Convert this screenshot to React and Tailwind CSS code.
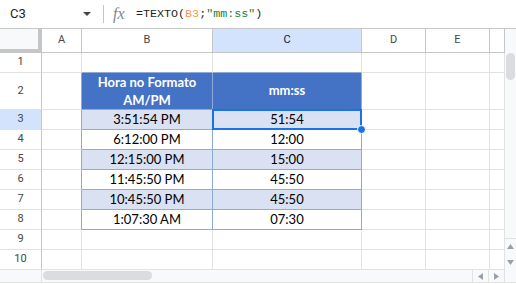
import React from 'react';

const data = [
  ['3:51:54 PM', '51:54'],
  ['6:12:00 PM', '12:00'],
  ['12:15:00 PM', '15:00'],
  ['11:45:50 PM', '45:50'],
  ['10:45:50 PM', '45:50'],
  ['1:07:30 AM', '07:30'],
];

const grid = 'border-r border-b border-[#e1e3e1]';
const tbl = 'border-r border-b border-[#8ea9db]';
const cellText = "flex items-center justify-center font-['Lato',sans-serif] text-[13px] text-black";

const RowNum = ({ n, sel, h }) => (
  <div
    className={`w-[42px] ${h} shrink-0 flex items-center justify-center border-r border-b border-r-[#c4c7c5] border-b-[#e1e3e1] text-[11px] text-[#444746] ${
      sel ? 'bg-[#d3e3fd] text-[#041e49]' : 'bg-white'
    }`}
  >
    {n}
  </div>
);

const Rest = ({ h }) => (
  <>
    <div className={`w-[64px] ${h} shrink-0 ${grid}`} />
    <div className={`w-[64px] ${h} shrink-0 ${grid}`} />
    <div className={`w-[15px] ${h} shrink-0 ${grid}`} />
  </>
);

const Triangle = ({ dir }) => {
  const pts = {
    up: '0,5 3.5,0 7,5',
    down: '0,0 3.5,5 7,0',
    left: '5,0 0,3.5 5,7',
    right: '0,0 5,3.5 0,7',
  }[dir];
  const vertical = dir === 'up' || dir === 'down';
  return (
    <svg width={vertical ? 7 : 5} height={vertical ? 5 : 7} viewBox={vertical ? '0 0 7 5' : '0 0 5 7'}>
      <polygon points={pts} fill="#9aa0a6" />
    </svg>
  );
};

export default function App() {
  return (
    <div className="w-[516px] h-[284px] overflow-hidden bg-white font-['Roboto',sans-serif]">
      {/* formula bar */}
      <div className="flex h-[29px] items-center border-b border-[#c4c7c5]">
        <div className="w-[83px] shrink-0 pl-[10px] text-[13px] text-[#1f1f1f]">C3</div>
        <svg width="8" height="4" viewBox="0 0 8 4" className="shrink-0">
          <polygon points="0,0 8,0 4,4" fill="#444746" />
        </svg>
        <div className="ml-[12px] w-px h-[18px] bg-[#c4c7c5] shrink-0" />
        <span className="ml-[9px] w-[14px] shrink-0 font-['Liberation_Serif',serif] italic text-[16px] leading-none text-[#80868b]">
          fx
        </span>
        <div className="ml-[9px] font-['Liberation_Mono',monospace] text-[11.7px] text-[#1f1f1f] pt-[1px]">
          =TEXTO(<span className="text-[#f2994a]">B3</span>;<span className="text-[#188038]">"mm:ss"</span>)
        </div>
      </div>

      <div className="flex">
        <div className="w-[505px]">
          {/* column headers */}
          <div className="flex h-[24px] text-[11px] text-[#444746]">
            <div className="w-[42px] shrink-0 bg-[#f8f9fa] border-r-4 border-b-4 border-[#c4c7c5]" />
            <div className="w-[40px] shrink-0 flex items-center justify-center border-r border-b border-[#c4c7c5]">A</div>
            <div className="w-[131px] shrink-0 flex items-center justify-center border-r border-b border-[#c4c7c5]">B</div>
            <div className="w-[149px] shrink-0 flex items-center justify-center border-r border-b border-[#c4c7c5] bg-[#d3e3fd] text-[#041e49]">
              C
            </div>
            <div className="w-[64px] shrink-0 flex items-center justify-center border-r border-b border-[#c4c7c5]">D</div>
            <div className="w-[64px] shrink-0 flex items-center justify-center border-r border-b border-[#c4c7c5]">E</div>
            <div className="w-[15px] shrink-0 border-r border-b border-[#c4c7c5]" />
          </div>

          {/* row 1 */}
          <div className="flex">
            <RowNum n={1} h="h-[20px]" />
            <div className={`w-[40px] h-[20px] shrink-0 ${grid}`} />
            <div className="w-[131px] h-[20px] shrink-0 border-r border-b border-r-[#e1e3e1] border-b-[#8ea9db]" />
            <div className="w-[149px] h-[20px] shrink-0 border-r border-b border-r-[#e1e3e1] border-b-[#8ea9db]" />
            <Rest h="h-[20px]" />
          </div>

          {/* row 2 - table header */}
          <div className="flex">
            <RowNum n={2} h="h-[37px]" />
            <div className="w-[40px] h-[37px] shrink-0 border-r border-b border-r-[#8ea9db] border-b-[#e1e3e1]" />
            <div className={`w-[131px] h-[37px] shrink-0 ${tbl} bg-[#4472c4] flex flex-col items-center justify-center font-['Lato',sans-serif] text-[13px] font-bold leading-[18px] text-white`}>
              <span>Hora no Formato</span>
              <span>AM/PM</span>
            </div>
            <div className={`w-[149px] h-[37px] shrink-0 ${tbl} bg-[#4472c4] flex items-center justify-center font-['Lato',sans-serif] text-[13px] font-bold text-white`}>
              mm:ss
            </div>
            <Rest h="h-[37px]" />
          </div>

          {/* data rows */}
          {data.map(([b, c], i) => {
            const n = i + 3;
            const bg = i % 2 === 0 ? 'bg-[#d9e1f2]' : 'bg-white';
            return (
              <div key={n} className="flex">
                <RowNum n={n} h="h-[20px]" sel={n === 3} />
                <div className="w-[40px] h-[20px] shrink-0 border-r border-b border-r-[#8ea9db] border-b-[#e1e3e1]" />
                <div className={`w-[131px] h-[20px] shrink-0 ${tbl} ${bg} ${cellText}`}>{b}</div>
                <div className={`relative w-[149px] h-[20px] shrink-0 ${tbl} ${bg} ${cellText}`}>
                  {c}
                  {n === 3 && (
                    <>
                      <div className="absolute -left-[1px] -top-[1px] -right-[1px] -bottom-[1px] border-2 border-[#1a73e8]" />
                      <div className="absolute -right-[5px] -bottom-[5px] z-10 w-[9px] h-[9px] rounded-full bg-[#1a73e8] border border-white" />
                    </>
                  )}
                </div>
                <Rest h="h-[20px]" />
              </div>
            );
          })}

          {/* rows 9-10 */}
          {[9, 10].map((n) => (
            <div key={n} className="flex">
              <RowNum n={n} h="h-[20px]" />
              <div className={`w-[40px] h-[20px] shrink-0 ${grid}`} />
              <div className={`w-[131px] h-[20px] shrink-0 ${grid}`} />
              <div className={`w-[149px] h-[20px] shrink-0 ${grid}`} />
              <Rest h="h-[20px]" />
            </div>
          ))}
        </div>

        {/* vertical scrollbar */}
        <div className="w-[11px] h-[241px] flex flex-col bg-[#f8f9fa]">
          <div className="mt-[24px] ml-[1px] w-[9px] h-[27px] rounded-full bg-[#dadce0]" />
          <div className="flex-1" />
          <div className="h-[16px] border-t border-[#e1e3e1] flex items-center justify-center">
            <Triangle dir="up" />
          </div>
          <div className="h-[16px] flex items-center justify-center">
            <Triangle dir="down" />
          </div>
        </div>
      </div>

      {/* horizontal scrollbar */}
      <div className="flex h-[13px] bg-[#f8f9fa] border-b border-[#e1e3e1]">
        <div className="w-[42px] shrink-0 border-r border-[#e1e3e1]" />
        <div className="w-[430px] shrink-0">
          <div className="mt-[1px] ml-[1px] w-[109px] h-[9px] rounded-full bg-[#dadce0]" />
        </div>
        <div className="w-[16px] shrink-0 border-l border-[#e1e3e1] flex items-center justify-center">
          <Triangle dir="left" />
        </div>
        <div className="w-[16px] shrink-0 border-l border-[#e1e3e1] flex items-center justify-center">
          <Triangle dir="right" />
        </div>
        <div className="w-[12px] shrink-0 border-l border-[#e1e3e1]" />
      </div>
    </div>
  );
}
